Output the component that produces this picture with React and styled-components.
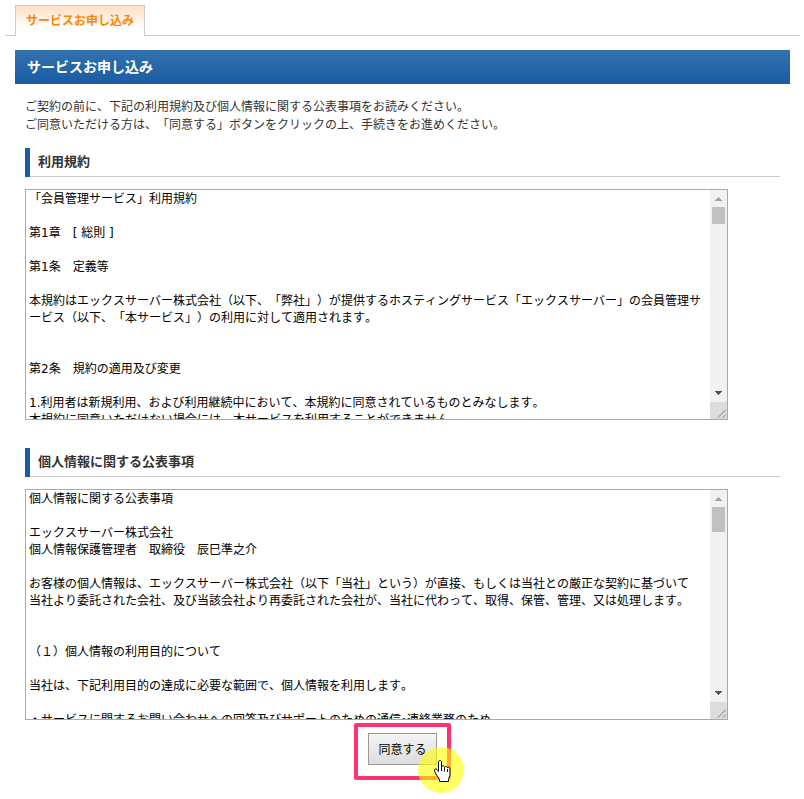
import React from "react";
import styled, { createGlobalStyle } from "styled-components";

const termsText = `「会員管理サービス」利用規約

第1章　[ 総則 ]

第1条　定義等

本規約はエックスサーバー株式会社（以下、「弊社」）が提供するホスティングサービス「エックスサーバー」の会員管理サ
ービス（以下、「本サービス」）の利用に対して適用されます。


第2条　規約の適用及び変更

1.利用者は新規利用、および利用継続中において、本規約に同意されているものとみなします。
本規約に同意いただけない場合には、本サービスを利用することができません。`;

const privacyText = `個人情報に関する公表事項

エックスサーバー株式会社
個人情報保護管理者　取締役　辰巳準之介

お客様の個人情報は、エックスサーバー株式会社（以下「当社」という）が直接、もしくは当社との厳正な契約に基づいて
当社より委託された会社、及び当該会社より再委託された会社が、当社に代わって、取得、保管、管理、又は処理します。


（１）個人情報の利用目的について

当社は、下記利用目的の達成に必要な範囲で、個人情報を利用します。

・サービスに関するお問い合わせへの回答及びサポートのための通信･連絡業務のため`;

function AgreementBox({ id, title, text, thumb }) {
  return (
    <Section>
      <SectionTitle>
        <label htmlFor={id}>{title}</label>
      </SectionTitle>
      <TextFrame>
        <TextArea id={id} defaultValue={text} readOnly wrap="off" />
        <ScrollColumn aria-hidden="true">
          <Arrow viewBox="0 0 17 17">
            <path d="M8 7h1v1h1v1h1v1h1v1H5v-1h1V9h1V8h1z" fill="#a3a3a3" />
          </Arrow>
          <Track>
            <Thumb $size={thumb} />
          </Track>
          <Arrow viewBox="0 0 17 17">
            <path d="M5 6h7v1h-1v1h-1v1H9v1H8V9H7V8H6V7H5z" fill="#505050" />
          </Arrow>
          <Grip viewBox="0 0 17 17">
            <path d="M8 15.500l8-8M13 15.500l3-3" stroke="#555" strokeDasharray="1 0.4" />
          </Grip>
        </ScrollColumn>
      </TextFrame>
    </Section>
  );
}

function App() {
  return (
    <>
      <GlobalStyle />
      <TabBar>
        <Tab href="#apply">サービスお申し込み</Tab>
      </TabBar>
      <Main id="apply">
        <PageTitle>サービスお申し込み</PageTitle>
        <Content>
          <Intro>
            ご契約の前に、下記の利用規約及び個人情報に関する公表事項をお読みください。
            <br />
            ご同意いただける方は、「同意する」ボタンをクリックの上、手続きをお進めください。
          </Intro>
          <AgreementBox id="terms" title="利用規約" text={termsText} thumb={17} />
          <AgreementBox id="privacy" title="個人情報に関する公表事項" text={privacyText} thumb={25} />
          <Actions>
            <Highlight>
              <AgreeButton type="button">同意する</AgreeButton>
              <Pointer>
                <svg width="46" height="46" viewBox="0 0 46 46" aria-hidden="true">
                  <path
                    d="M20.5 15c0-2 3-2 3 0v5c0-1.500 3-1.500 3 .5 0-1.500 3-1.500 3 .5 0-1.200 2.500-1.200 2.500 1v5.500c0 2-1.500 3-1.500 5v2h-9v-2c-1-2.500-3.500-4.500-4.500-7.500-1.500-3 .5-4 2-2.500l1.500 2z"
                    fill="#fff"
                    stroke="#000"
                  />
                  <path d="M23.500 20v4M26.500 21v3.500M29.500 22v3" stroke="#000" />
                </svg>
              </Pointer>
            </Highlight>
          </Actions>
        </Content>
      </Main>
    </>
  );
}

const GlobalStyle = createGlobalStyle`
  body {
    margin: 0;
    background-color: #fff;
    color: #333;
    font-family: "DejaVu Sans", "Noto Sans CJK JP", sans-serif;
    font-size: 12px;
    font-kerning: none;
    line-height: 18px;
    text-spacing-trim: space-all;
  }
`;

const TabBar = styled.nav`
  display: flex;
  margin: 5px 4px 0 5px;
  padding: 0 10px;
  box-shadow: inset 0 -1px #ccc;
`;

const Tab = styled.a`
  padding: 6px 10px;
  border: 1px solid #ccc;
  border-bottom: 0;
  background: linear-gradient(#ffdfc0, #fff 70%);
  color: #ff8400;
  font-weight: bold;
  text-decoration: none;
`;

const Main = styled.main`
  margin: 14px 14px 0 15px;
`;

const PageTitle = styled.h1`
  margin: 0;
  padding: 0 12px;
  background: linear-gradient(#3272ad, #1a5ba4);
  color: #fff;
  font-size: 14px;
  line-height: 34px;
`;

const Content = styled.div`
  padding: 14px 10px 18px;
`;

const Intro = styled.p`
  margin: 0 0 14px;
`;

const Section = styled.section`
  margin-bottom: 28px;

  &:last-of-type {
    margin-bottom: 3px;
  }
`;

const SectionTitle = styled.h2`
  margin: 0 0 12px;
  padding: 0 8px 2px;
  border-left: 5px solid #1a5ba4;
  box-shadow: inset 0 -1px #ccc;
  font-size: 13px;
  line-height: 27px;
`;

const TextFrame = styled.div`
  display: flex;
  box-sizing: border-box;
  height: 231px;
  max-width: 703px;
  border: 1px solid #a9a9a9;
`;

const TextArea = styled.textarea`
  flex: 1;
  min-width: 0;
  margin: 0;
  padding: 1px 3px 0;
  border: 0;
  outline: 0;
  resize: none;
  overflow: hidden;
  background-color: #fff;
  color: #000;
  font-family: inherit;
  font-size: 12px;
  font-kerning: none;
  line-height: 17px;
  text-spacing-trim: space-all;
`;

const ScrollColumn = styled.div`
  display: flex;
  flex-direction: column;
  width: 17px;
  background-color: #f1f1f1;
`;

const Arrow = styled.svg`
  width: 17px;
  height: 17px;
`;

const Track = styled.div`
  flex: 1;
  padding: 0 2px;
`;

const Thumb = styled.div`
  height: ${({ $size }) => $size}px;
  background-color: #c1c1c1;
`;

const Grip = styled.svg`
  width: 17px;
  height: 17px;
  background-color: #dcdcdc;
`;

const Actions = styled.div`
  display: flex;
  justify-content: center;
`;

const Highlight = styled.div`
  position: relative;
  padding: 6px 10px 11px;
  border: 4px solid #ff3370;
  border-radius: 2px;
`;

const AgreeButton = styled.button`
  display: block;
  height: 32px;
  padding: 0 9px 2px;
  border: 1px solid #999;
  background: linear-gradient(#f4f4f4, #dcdcdc);
  color: #000;
  font-family: inherit;
  font-size: 12px;
  cursor: pointer;
`;

const Pointer = styled.div`
  position: absolute;
  right: -17px;
  bottom: -17px;
  width: 46px;
  height: 46px;
  border-radius: 50%;
  background-color: rgba(255, 255, 0, 0.6);
  pointer-events: none;
`;

export default App;
